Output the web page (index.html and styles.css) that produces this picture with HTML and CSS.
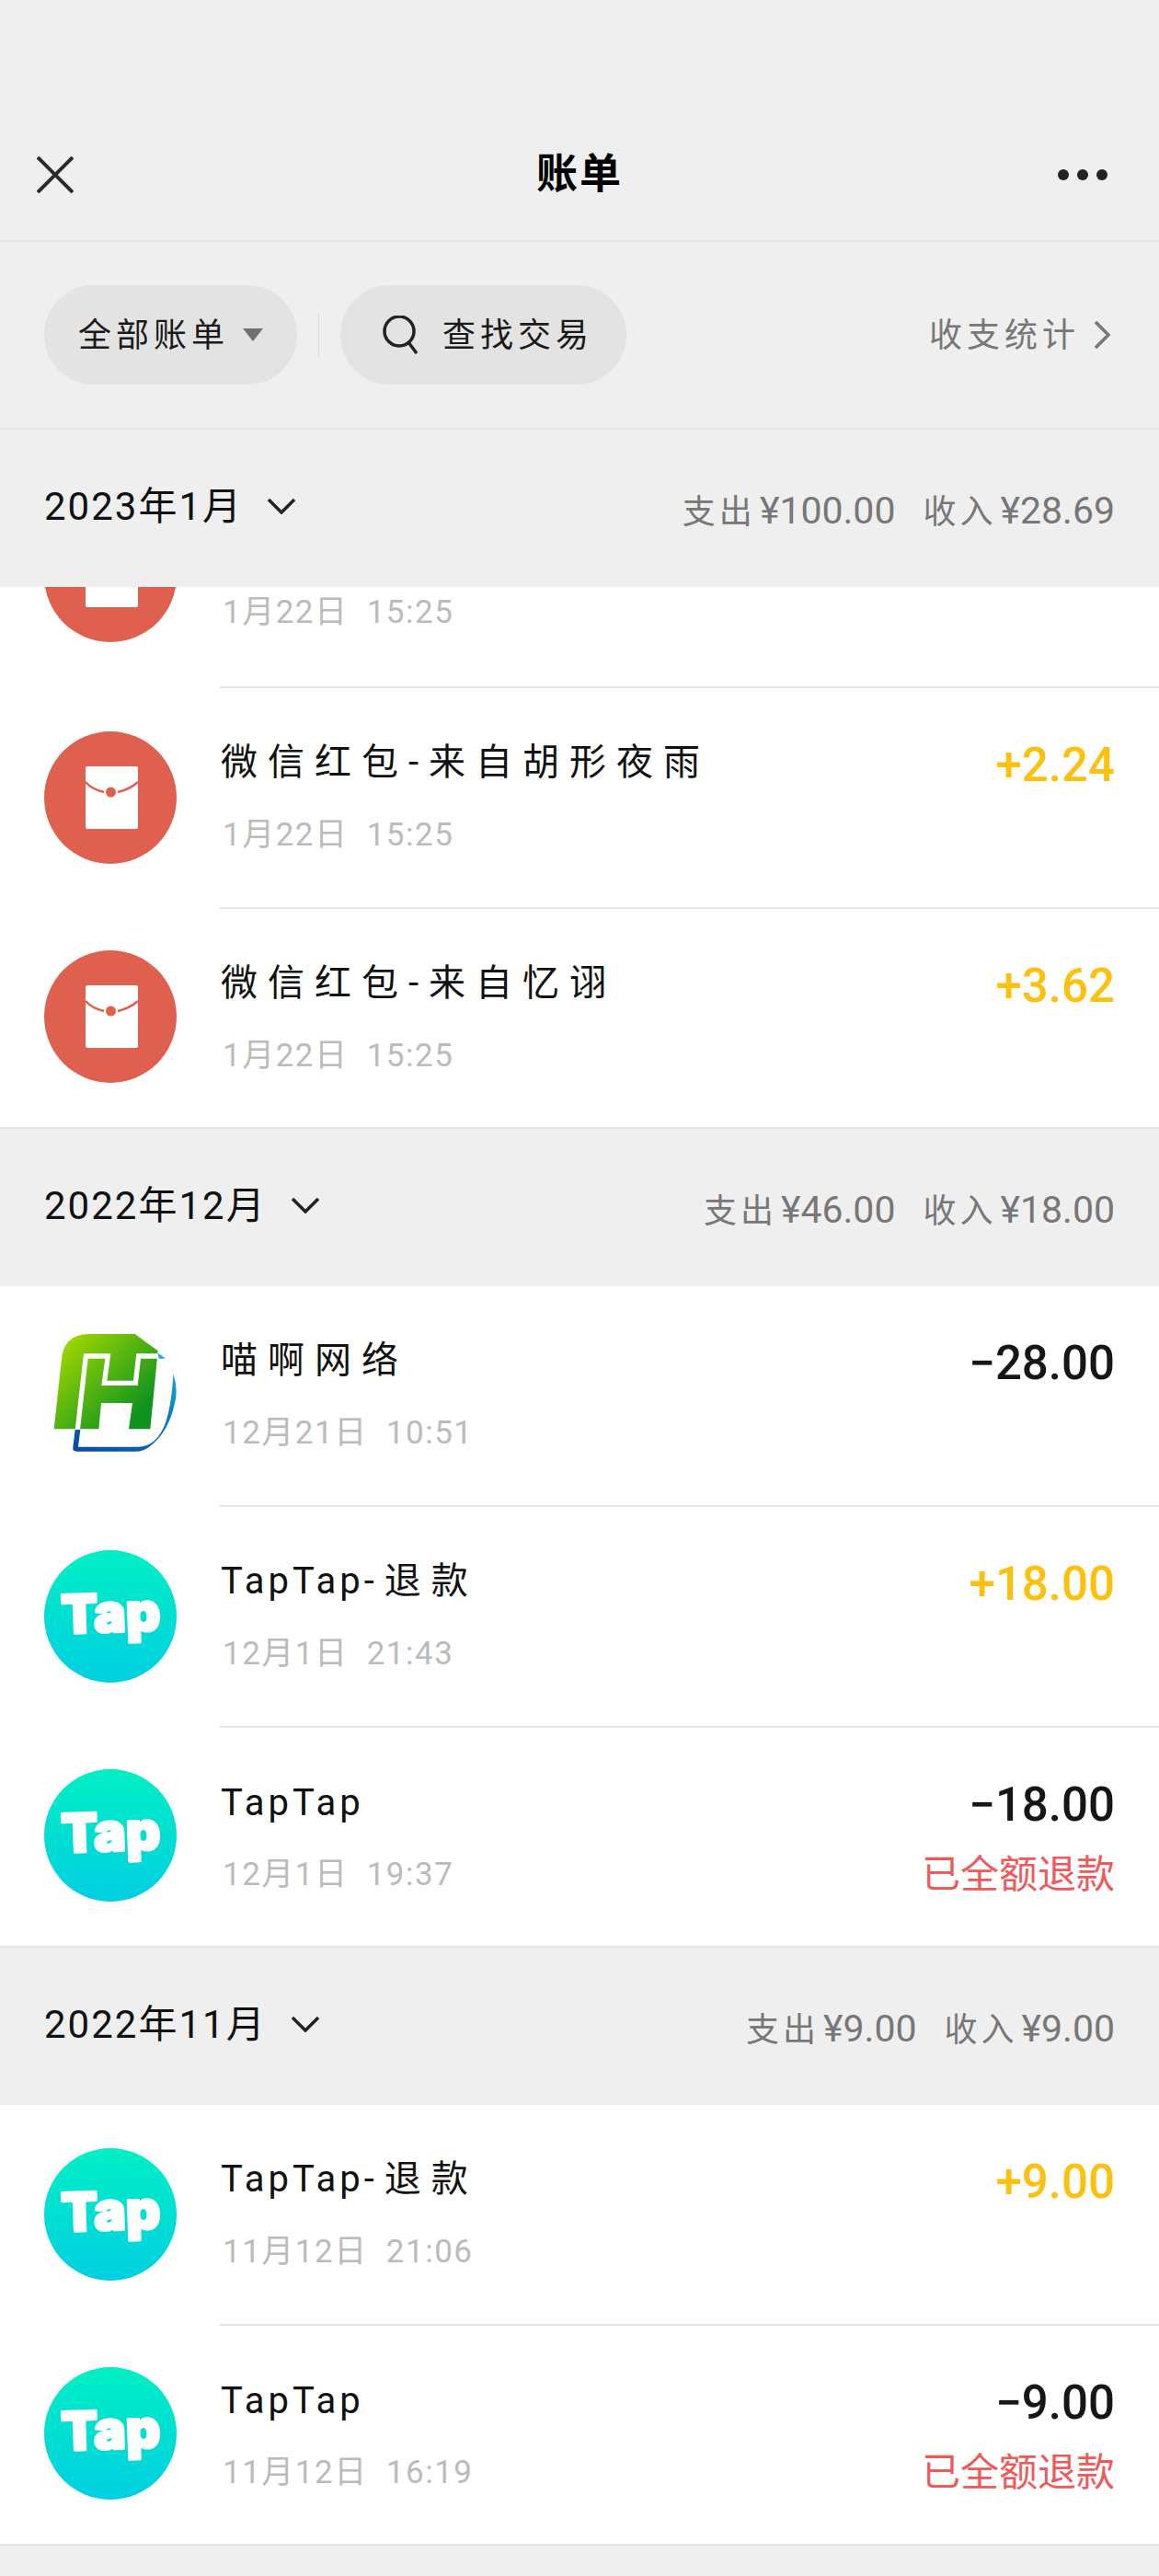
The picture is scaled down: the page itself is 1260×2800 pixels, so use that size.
FILE: index.html
```html
<!DOCTYPE html>
<html lang="zh-CN">
<head>
  <meta charset="UTF-8">
  <meta name="viewport" content="width=device-width, initial-scale=1.0">
  <title>账单</title>
  <link rel="stylesheet" href="styles.css">
</head>
<body>
  <svg class="defs" width="0" height="0">
    <defs>
      <linearGradient id="tap-bg" x1="0" y1="0" x2="0" y2="1">
        <stop offset="0" stop-color="#00efc4"/>
        <stop offset="1" stop-color="#00cfe2"/>
      </linearGradient>
      <linearGradient id="h-green" x1="0.1" y1="0.1" x2="0.85" y2="0.8">
        <stop offset="0" stop-color="#9ed600"/>
        <stop offset="1" stop-color="#0e931f"/>
      </linearGradient>
      <linearGradient id="h-blue" x1="0" y1="1" x2="1" y2="0">
        <stop offset="0" stop-color="#0a4a9c"/>
        <stop offset="0.6" stop-color="#0b6fb8"/>
        <stop offset="1" stop-color="#14a6dc"/>
      </linearGradient>
      <symbol id="packet" viewBox="0 0 144 144">
        <circle cx="72" cy="72" r="72" fill="#e0604f"/>
        <rect x="45" y="38" width="57" height="68" rx="2" fill="#fff"/>
        <path d="M45 55 Q52 63 65 66 M80 66 Q93 63 102 55" fill="none" stroke="#e0604f" stroke-width="2.5"/>
        <circle cx="72.5" cy="66" r="5.5" fill="#e0604f"/>
      </symbol>
      <symbol id="tap" viewBox="0 0 144 144">
        <circle cx="72" cy="72" r="72" fill="url(#tap-bg)"/>
        <text x="72.5" y="89" text-anchor="middle" transform="rotate(-2 72 72)" class="tap-word">Tap</text>
      </symbol>
      <symbol id="hlogo" viewBox="144 135 432 432">
        <path d="M176 460 L200 240 Q206 150 290 150 L440 150 L515 205 L490 460 L420 460 L432 375 L330 375 L322 460 Z" fill="url(#h-green)"/>
        <path d="M253 462 L280 222 L352 222 L340 310 L442 310 L452 222 L515 222" fill="none" stroke="#fff" stroke-width="16"/>
        <path d="M515 212 L540 230 L518 230 Z" fill="#14a6dc"/>
        <path d="M245 462 L262 462 L255 518 L450 518 Q510 518 540 440 Q560 380 565 280 Q582 330 570 375 Q550 470 490 515 Q470 533 440 533 L250 533 Q236 533 238 520 Z" fill="url(#h-blue)"/>
      </symbol>
    </defs>
  </svg>

  <header class="nav">
    <svg class="nav-close" viewBox="0 0 40 40"><path d="M1 1 L39 39 M39 1 L1 39" stroke="#2b2b2b" stroke-width="4" fill="none"/></svg>
    <h1 class="nav-title">账单</h1>
    <svg class="nav-more" viewBox="0 0 54 12"><circle cx="6" cy="6" r="6"/><circle cx="27" cy="6" r="6"/><circle cx="48" cy="6" r="6"/></svg>
  </header>

  <div class="filters">
    <div class="pill pill-all">
      <span>全部账单</span>
      <i class="caret"></i>
    </div>
    <div class="filters-sep"></div>
    <div class="pill pill-search">
      <svg class="search-icon" viewBox="0 0 42 42"><circle cx="19" cy="17" r="16" fill="none" stroke="#222" stroke-width="3.5"/><path d="M29 29 L38 41" stroke="#222" stroke-width="3.5" fill="none"/></svg>
      <span>查找交易</span>
    </div>
    <div class="stats">
      <span>收支统计</span>
      <svg class="stats-arrow" viewBox="0 0 20 32"><path d="M3 2 L17 16 L3 30" fill="none" stroke="#777" stroke-width="3.5"/></svg>
    </div>
  </div>

  <section class="month">
    <div class="month-label">2023年1月<svg class="month-arrow" viewBox="0 0 32 18"><path d="M2 2 L16 16 L30 2" fill="none" stroke="#222" stroke-width="3.5"/></svg></div>
    <div class="month-sum"><span><b>支出</b>¥100.00</span><span><b>收入</b>¥28.69</span></div>
  </section>
  <div class="list">
    <div class="row row-cut">
      <svg class="row-icon"><use href="#packet"/></svg>
      <div class="row-body">
        <div class="row-top"></div>
        <div class="row-bottom"><span class="date">1月22日 15:25</span></div>
      </div>
    </div>
    <div class="row">
      <svg class="row-icon"><use href="#packet"/></svg>
      <div class="row-body">
        <div class="row-top"><span class="name">微信红包-来自胡形夜雨</span><span class="amount plus">+2.24</span></div>
        <div class="row-bottom"><span class="date">1月22日 15:25</span></div>
      </div>
    </div>
    <div class="row">
      <svg class="row-icon"><use href="#packet"/></svg>
      <div class="row-body">
        <div class="row-top"><span class="name">微信红包-来自忆诩</span><span class="amount plus">+3.62</span></div>
        <div class="row-bottom"><span class="date">1月22日 15:25</span></div>
      </div>
    </div>
  </div>

  <section class="month">
    <div class="month-label">2022年12月<svg class="month-arrow" viewBox="0 0 32 18"><path d="M2 2 L16 16 L30 2" fill="none" stroke="#222" stroke-width="3.5"/></svg></div>
    <div class="month-sum"><span><b>支出</b>¥46.00</span><span><b>收入</b>¥18.00</span></div>
  </section>
  <div class="list">
    <div class="row">
      <svg class="row-icon"><use href="#hlogo"/></svg>
      <div class="row-body">
        <div class="row-top"><span class="name">喵啊网络</span><span class="amount">−28.00</span></div>
        <div class="row-bottom"><span class="date">12月21日 10:51</span></div>
      </div>
    </div>
    <div class="row">
      <svg class="row-icon"><use href="#tap"/></svg>
      <div class="row-body">
        <div class="row-top"><span class="name"><span class="latin">TapTap</span>-退款</span><span class="amount plus">+18.00</span></div>
        <div class="row-bottom"><span class="date">12月1日 21:43</span></div>
      </div>
    </div>
    <div class="row">
      <svg class="row-icon"><use href="#tap"/></svg>
      <div class="row-body">
        <div class="row-top"><span class="name plain"><span class="latin">TapTap</span></span><span class="amount">−18.00</span></div>
        <div class="row-bottom"><span class="date">12月1日 19:37</span><span class="refund">已全额退款</span></div>
      </div>
    </div>
  </div>

  <section class="month">
    <div class="month-label">2022年11月<svg class="month-arrow" viewBox="0 0 32 18"><path d="M2 2 L16 16 L30 2" fill="none" stroke="#222" stroke-width="3.5"/></svg></div>
    <div class="month-sum"><span><b>支出</b>¥9.00</span><span><b>收入</b>¥9.00</span></div>
  </section>
  <div class="list">
    <div class="row">
      <svg class="row-icon"><use href="#tap"/></svg>
      <div class="row-body">
        <div class="row-top"><span class="name"><span class="latin">TapTap</span>-退款</span><span class="amount plus">+9.00</span></div>
        <div class="row-bottom"><span class="date">11月12日 21:06</span></div>
      </div>
    </div>
    <div class="row">
      <svg class="row-icon"><use href="#tap"/></svg>
      <div class="row-body">
        <div class="row-top"><span class="name plain"><span class="latin">TapTap</span></span><span class="amount">−9.00</span></div>
        <div class="row-bottom"><span class="date">11月12日 16:19</span><span class="refund">已全额退款</span></div>
      </div>
    </div>
  </div>
</body>
</html>
```

FILE: styles.css
```css
body {
  margin: 0;
  height: 2800px;
  overflow: hidden;
  background-color: #efefef;
  font-family: "Roboto", "Noto Sans CJK SC", sans-serif;
  color: #111;
}
.defs {
  display: block;
  height: 0;
}
.nav {
  height: 263px;
  box-sizing: border-box;
  padding: 118px 56px 0;
  display: grid;
  grid-template-columns: 1fr auto 1fr;
  align-items: center;
  border-bottom: 2px solid #e6e6e6;
}
.nav-close {
  width: 40px;
  height: 40px;
  margin-left: -16px;
}
.nav-title {
  margin: 0;
  font-size: 45px;
  font-weight: 700;
  letter-spacing: 2px;
  color: #000;
  line-height: 60px;
}
.nav-more {
  width: 54px;
  height: 12px;
  justify-self: end;
  fill: #222;
}
.filters {
  height: 204px;
  box-sizing: border-box;
  padding: 0 52px 0 48px;
  display: flex;
  align-items: center;
  border-bottom: 2px solid #e6e6e6;
}
.pill {
  height: 108px;
  border-radius: 54px;
  background-color: #e3e3e3;
  display: flex;
  align-items: center;
  font-size: 36px;
  letter-spacing: 5px;
  color: #1a1a1a;
}
.pill span,
.stats span {
  margin-bottom: 6px;
}
.pill-all {
  width: 275px;
  padding-left: 37px;
  box-sizing: border-box;
}
.caret {
  margin-left: 15px;
  border-left: 11px solid transparent;
  border-right: 11px solid transparent;
  border-top: 14px solid #707070;
}
.filters-sep {
  width: 1px;
  height: 47px;
  margin: 0 23px;
  background-color: #dcdcdc;
}
.pill-search {
  width: 311px;
  padding-left: 45px;
  box-sizing: border-box;
}
.search-icon {
  width: 42px;
  height: 42px;
  margin-right: 24px;
  flex: none;
}
.stats {
  margin-left: auto;
  display: flex;
  align-items: center;
  font-size: 36px;
  letter-spacing: 5px;
  color: #777;
}
.stats-arrow {
  width: 20px;
  height: 32px;
  margin-left: 14px;
}
.month {
  height: 171px;
  padding: 0 48px;
  display: flex;
  align-items: center;
  justify-content: space-between;
}
.month-label {
  display: flex;
  align-items: center;
  padding-bottom: 12px;
  font-size: 42px;
  letter-spacing: 2px;
  color: #111;
}
.month-arrow {
  width: 32px;
  height: 18px;
  margin: 6px 0 0 26px;
}
.month-sum {
  display: flex;
  gap: 30px;
  font-size: 41px;
  color: #777;
}
.month-sum b {
  font-weight: 400;
  font-size: 36px;
  letter-spacing: 4px;
  margin-right: 4px;
}
.list {
  background-color: #fff;
  border-bottom: 2px solid #e4e4e4;
}
.row {
  height: 240px;
  padding-left: 48px;
  display: flex;
  align-items: center;
}
.list .row:last-child {
  height: 237px;
}
.row-cut {
  height: 110px;
  overflow: hidden;
  align-items: flex-end;
}
.row-icon {
  width: 144px;
  height: 144px;
  margin: 0 47px 3px 0;
  flex: none;
}
.row-cut .row-icon {
  margin-bottom: 50px;
}
.row-body {
  flex: 1;
  height: 100%;
  padding: 52px 48px 0 0;
  box-sizing: border-box;
  border-bottom: 2px solid #e6e6e6;
}
.row-cut .row-body {
  height: 240px;
  flex: none;
  width: 1021px;
  padding-top: 50px;
}
.list .row:last-child .row-body {
  border-bottom: none;
}
.row-top,
.row-bottom {
  height: 56px;
  display: flex;
  align-items: center;
  justify-content: space-between;
}
.row-bottom {
  margin-top: 19px;
}
.name {
  margin-bottom: 6px;
  padding-left: 1px;
  font-size: 40px;
  letter-spacing: 11px;
  color: #111;
}
.name.plain {
  margin: 2px 0 0;
}
.latin {
  letter-spacing: 4px;
}
.amount {
  margin-top: 6px;
  font-size: 51px;
  font-weight: 500;
  color: #161616;
}
.amount.plus {
  color: #fcc10f;
}
.date {
  padding-left: 3px;
  font-size: 35px;
  letter-spacing: 1.5px;
  word-spacing: 10px;
  color: #bbb;
}
.refund {
  font-family: "Noto Sans CJK SC", sans-serif;
  font-size: 42px;
  color: #ee5a5a;
}
.tap-word {
  font-family: "Inter", sans-serif;
  font-size: 58px;
  font-weight: 900;
  fill: #fff;
  stroke: #fff;
  stroke-width: 3px;
  stroke-linejoin: round;
}
```
